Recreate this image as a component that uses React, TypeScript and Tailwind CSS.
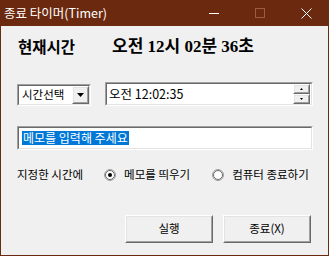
import React from "react";

const font = { fontFamily: '"Noto Sans CJK KR", "Noto Sans", sans-serif' };
const serif = { fontFamily: '"Liberation Serif", "Noto Sans CJK KR", serif' };

function Sunken({ className, children }: { className?: string; children?: React.ReactNode }) {
  return (
    <div className={"border border-t-[#a0a0a0] border-l-[#a0a0a0] border-b-white border-r-white " + (className || "")}>
      <div className="h-full w-full border border-t-[#696969] border-l-[#696969] border-b-[#e3e3e3] border-r-[#e3e3e3] bg-white">
        {children}
      </div>
    </div>
  );
}

function Raised({ className, children }: { className?: string; children?: React.ReactNode }) {
  return (
    <div className={"border border-t-white border-l-white border-b-[#696969] border-r-[#696969] " + (className || "")}>
      <div className="h-full w-full border border-t-[#e3e3e3] border-l-[#e3e3e3] border-b-[#a0a0a0] border-r-[#a0a0a0] bg-[#f0f0f0] flex items-center justify-center">
        {children}
      </div>
    </div>
  );
}

function Radio({ checked }: { checked?: boolean }) {
  return (
    <div className="w-[12px] h-[12px] rounded-full border border-[#a0a0a0] bg-white flex items-center justify-center">
      <div className="w-[10px] h-[10px] rounded-full border border-[#696969] flex items-center justify-center">
        {checked && <div className="w-[4px] h-[4px] rounded-full bg-black" />}
      </div>
    </div>
  );
}

export default function App() {
  return (
    <div className="w-[329px] h-[256px] bg-[#6b2a0f] flex flex-col" style={font}>
      <div className="h-[26px] flex items-center text-white shrink-0">
        <span className="pl-[4px] text-[12.5px] leading-none">종료 타이머(Timer)</span>
        <div className="flex-1" />
        <div className="w-[46px] h-full flex items-center justify-center">
          <div className="w-[10px] h-[1px] bg-white" />
        </div>
        <div className="w-[46px] h-full flex items-center justify-center">
          <div className="w-[10px] h-[10px] border border-[#a05a3e]" />
        </div>
        <div className="w-[46px] h-full flex items-center justify-center">
          <svg width="11" height="11" viewBox="0 0 11 11">
            <path d="M0.5 0.5 L10.5 10.5 M10.5 0.5 L0.5 10.5" stroke="white" strokeWidth="1" />
          </svg>
        </div>
      </div>
      <div className="mx-[1px] mb-[1px] flex-1 bg-[#f0f0f0] text-[11.5px] text-black flex flex-col">
        <div className="mt-[11px] h-[20px] flex items-center font-bold text-[15.5px]">
          <span className="ml-[17px]">현재시간</span>
          <span className="ml-[37px] text-[17px]" style={serif}>오전 12시 02분 36초</span>
        </div>
        <div className="mt-[25px] h-[24px] flex items-end">
          <Sunken className="ml-[16px] w-[74px] h-[22px]">
            <div className="flex h-full items-center">
              <span className="pl-[3px] flex-1 leading-none">시간선택</span>
              <Raised className="w-[17px] h-full">
                <svg width="7" height="4" viewBox="0 0 7 4"><path d="M0 0 H7 L3.5 4 Z" fill="black" /></svg>
              </Raised>
            </div>
          </Sunken>
          <Sunken className="ml-[14px] w-[208px] h-[24px]">
            <div className="flex h-full items-center">
              <span className="pl-[2px] flex-1 text-[12.5px] leading-none">오전 12:02:35</span>
              <div className="w-[17px] h-full flex flex-col mr-[1px]">
                <Raised className="w-full h-1/2">
                  <svg width="3" height="2" viewBox="0 0 3 2"><path d="M1.5 0 L3 2 H0 Z" fill="black" /></svg>
                </Raised>
                <Raised className="w-full h-1/2">
                  <svg width="3" height="2" viewBox="0 0 3 2"><path d="M0 0 H3 L1.5 2 Z" fill="black" /></svg>
                </Raised>
              </div>
            </div>
          </Sunken>
        </div>
        <Sunken className="mt-[20px] ml-[16px] w-[296px] h-[24px]">
          <div className="flex h-full items-center pl-[3px]">
            <span className="bg-[#0078d7] text-white text-[12px] leading-[14px] px-[1px]">메모를 입력해 주세요</span>
          </div>
        </Sunken>
        <div className="mt-[17px] h-[16px] flex items-center">
          <span className="ml-[16px]">지정한 시간에</span>
          <div className="ml-[21px]"><Radio checked /></div>
          <span className="ml-[8px]">메모를 띄우기</span>
          <div className="ml-[22px]"><Radio /></div>
          <span className="ml-[8px]">컴퓨터 종료하기</span>
        </div>
        <div className="mt-[32px] flex">
          <Raised className="ml-[124px] w-[88px] h-[28px]"><span>실행</span></Raised>
          <Raised className="ml-[10px] w-[88px] h-[28px]"><span>종료(X)</span></Raised>
        </div>
      </div>
    </div>
  );
}
